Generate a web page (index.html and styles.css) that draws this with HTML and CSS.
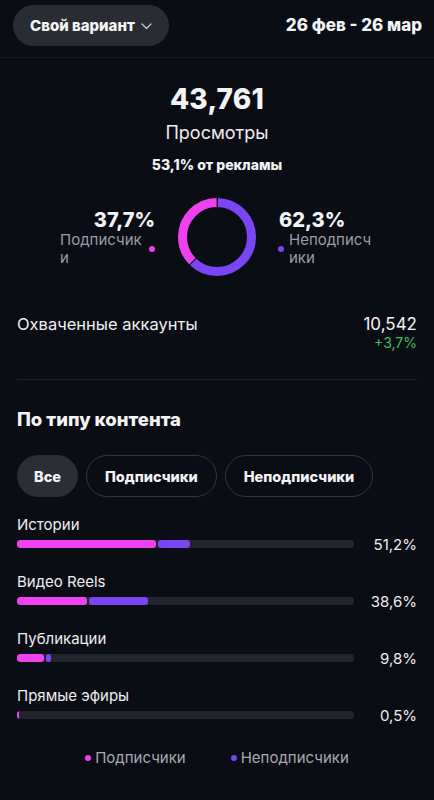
FILE: index.html
```html
<!DOCTYPE html>
<html lang="ru">
<head>
<meta charset="utf-8">
<link rel="stylesheet" href="styles.css">
</head>
<body>
<div class="page">
  <header class="top">
    <button class="range-btn">Свой вариант
      <svg class="chev" width="11" height="7" viewBox="0 0 11 7"><path d="M1 1l4.5 4.5L10 1" fill="none" stroke="#c9cad0" stroke-width="1.3" stroke-linecap="round" stroke-linejoin="round"/></svg>
    </button>
    <div class="dates">26 фев - 26 мар</div>
  </header>

  <section class="summary">
    <div class="big">43,761</div>
    <div class="big-label">Просмотры</div>
    <div class="ads">53,1% от рекламы</div>
  </section>

  <section class="donut-row">
    <div class="side left">
      <div class="pct">37,7%</div>
      <div class="legend-l"><span class="lbl">Подписчик и</span><span class="dot pink"></span></div>
    </div>
    <svg class="donut" width="82" height="82" viewBox="0 0 82 82">
      <circle cx="41" cy="41" r="34.5" fill="none" stroke="#7a45f4" stroke-width="9" stroke-dasharray="133.5 83.3" stroke-dashoffset="-1" transform="rotate(-90 41 41)"/>
      <circle cx="41" cy="41" r="34.5" fill="none" stroke="#ee42f0" stroke-width="9" stroke-dasharray="80.5 136.3" stroke-dashoffset="-135.5" transform="rotate(-90 41 41)"/>
    </svg>
    <div class="side right">
      <div class="pct">62,3%</div>
      <div class="legend-r"><span class="dot purple"></span><span class="lbl">Неподписч ики</span></div>
    </div>
  </section>

  <section class="reach">
    <div class="reach-label">Охваченные аккаунты</div>
    <div class="reach-val">
      <div class="num">10,542</div>
      <div class="delta">+3,7%</div>
    </div>
  </section>

  <div class="divider"></div>

  <h2 class="section-title">По типу контента</h2>

  <div class="chips">
    <span class="chip active">Все</span>
    <span class="chip">Подписчики</span>
    <span class="chip">Неподписчики</span>
  </div>

  <section class="bars">
    <div class="bar-row">
      <div class="bar-label">Истории</div>
      <div class="bar-line">
        <div class="track"><span class="seg pink" style="width:139px"></span><span class="seg purple" style="width:32px"></span></div>
        <div class="bar-pct">51,2%</div>
      </div>
    </div>
    <div class="bar-row">
      <div class="bar-label">Видео Reels</div>
      <div class="bar-line">
        <div class="track"><span class="seg pink" style="width:70px"></span><span class="seg purple" style="width:59px"></span></div>
        <div class="bar-pct">38,6%</div>
      </div>
    </div>
    <div class="bar-row">
      <div class="bar-label">Публикации</div>
      <div class="bar-line">
        <div class="track"><span class="seg pink" style="width:27px"></span><span class="seg purple" style="width:5px"></span></div>
        <div class="bar-pct">9,8%</div>
      </div>
    </div>
    <div class="bar-row">
      <div class="bar-label">Прямые эфиры</div>
      <div class="bar-line">
        <div class="track"><span class="seg pink" style="width:2px"></span></div>
        <div class="bar-pct">0,5%</div>
      </div>
    </div>
  </section>

  <footer class="legend">
    <span class="leg"><span class="dot pink"></span>Подписчики</span>
    <span class="leg"><span class="dot purple"></span>Неподписчики</span>
  </footer>
</div>
</body>
</html>
```

FILE: styles.css
```css
* { box-sizing: border-box; }
html, body { margin: 0; padding: 0; background: #0b0d14; }
body {
  font-family: Inter, "Noto Sans", sans-serif;
  color: #f4f4f6;
  width: 434px;
  height: 800px;
  overflow: hidden;
}
.page { display: flex; flex-direction: column; }

.top {
  display: flex;
  justify-content: space-between;
  align-items: flex-start;
  padding: 5px 13px 0 13px;
  height: 58px;
  border-bottom: 1px solid #1a1c23;
}
.range-btn {
  display: flex;
  align-items: center;
  gap: 6px;
  height: 41px;
  padding: 0 17px 0 17px;
  border: none;
  border-radius: 21px;
  background: #2a2c34;
  color: #f4f4f6;
  font-family: inherit;
  font-size: 15px;
  font-weight: 800;
}
.chev { margin-top: 1px; }
.dates {
  font-size: 17px;
  font-weight: 800;
  margin-top: 10px;
  margin-right: -1px;
}

.summary {
  display: flex;
  flex-direction: column;
  align-items: center;
  padding-top: 24px;
}
.big { font-size: 28px; font-weight: 800; line-height: 34px; letter-spacing: 0.2px; }
.big-label { font-size: 18px; line-height: 22px; margin-top: 6px; color: #eeeef1; }
.ads { font-size: 14px; font-weight: 800; line-height: 18px; margin-top: 12px; }

.donut-row {
  display: grid;
  grid-template-columns: 1fr 82px 1fr;
  align-items: center;
  column-gap: 20px;
  margin-top: 22px;
}
.donut { display: block; }
.side { display: flex; flex-direction: column; }
.side.left { align-items: flex-end; }
.side.right { align-items: flex-start; }
.pct { font-size: 20px; font-weight: 800; line-height: 22px; margin-top: 2px; }
.side.left .pct { margin-right: 1px; }
.side.right .pct { margin-left: 1px; }
.legend-l, .legend-r { display: flex; align-items: center; gap: 5px; }
.legend-l { width: 96px; justify-content: flex-end; padding-right: 1px; }
.legend-r { width: 100px; }
.lbl { font-size: 15px; line-height: 18px; color: #9b9ca4; word-break: break-all; }
.legend-l .lbl { width: 86px; }
.legend-r .lbl { width: 88px; }
.dot { display: inline-block; width: 6px; height: 6px; border-radius: 50%; flex: none; }
.dot.pink { background: #ee42f0; }
.dot.purple { background: #7a45f4; }

.reach {
  display: flex;
  justify-content: space-between;
  align-items: flex-start;
  padding: 0 17px;
  margin-top: 36px;
}
.reach-label { font-size: 16.5px; line-height: 20px; color: #f0f0f3; }
.reach-val { text-align: right; }
.reach-val .num { font-size: 17px; line-height: 20px; }
.reach-val .delta { font-size: 14px; line-height: 17px; color: #3fbf63; }

.divider { height: 1px; background: #22242b; margin: 28px 17px 0 17px; }

.section-title {
  font-size: 18.5px;
  font-weight: 800;
  margin: 27px 17px 0 17px;
  line-height: 24px;
}

.chips {
  display: flex;
  gap: 8px;
  padding: 0 17px;
  margin-top: 24px;
}
.chip {
  display: inline-flex;
  align-items: center;
  height: 42px;
  padding: 0 18px;
  border-radius: 21px;
  border: 1px solid #34363e;
  font-size: 14.5px;
  font-weight: 800;
  color: #f4f4f6;
}
.chip.active { background: #2c2e36; border-color: #2c2e36; padding: 0 16px; }

.bars { padding: 0 17px; margin-top: 18px; display: flex; flex-direction: column; gap: 18px; }
.bar-row { display: flex; flex-direction: column; }
.bar-label { font-size: 15px; line-height: 19px; color: #eeeef1; }
.bar-line { display: flex; align-items: center; justify-content: space-between; height: 20px; }
.track {
  width: 337px;
  height: 8px;
  border-radius: 3px;
  background: #23252d;
  display: flex;
  gap: 2px;
  overflow: hidden;
}
.seg { display: block; height: 100%; border-radius: 3px; }
.seg.pink { background: #ee42f0; }
.seg.purple { background: #7a45f4; }
.bar-pct { font-size: 15px; color: #eeeef1; }

.legend {
  display: flex;
  justify-content: center;
  gap: 45px;
  margin-top: 23px;
  font-size: 15px;
  color: #a9aab1;
}
.leg { display: inline-flex; align-items: center; gap: 4px; }
```
